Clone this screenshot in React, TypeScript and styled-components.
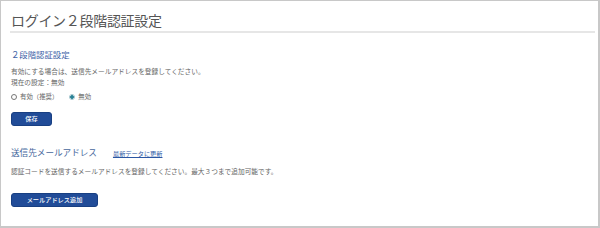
import styled, { createGlobalStyle } from 'styled-components';

const GlobalStyle = createGlobalStyle`
  html, body {
    margin: 0;
    padding: 0;
    background: #ffffff;
  }
  body {
    font-family: "Noto Sans CJK JP", "Noto Sans", sans-serif;
  }
`;

const Frame = styled.div`
  width: 600px;
  height: 228px;
  box-sizing: border-box;
  border: 1px solid #c8c8c8;
  border-right-width: 2px;
  border-bottom-width: 2px;
  padding: 0 3px 0 9px;
  background: #ffffff;
`;

const PageTitle = styled.h1`
  margin: 9px 0 0;
  padding: 0 0 1px 1px;
  font-size: 14px;
  line-height: 20px;
  font-weight: 400;
  color: #555555;
  border-bottom: 2px solid #e6e6e6;
  letter-spacing: -0.3px;
`;

const Body = styled.div`
  display: flex;
  flex-direction: column;
  align-items: flex-start;
  padding-left: 1px;
`;

const SectionTitle = styled.h2<{ $top: number }>`
  margin: ${({ $top }) => $top}px 0 0;
  display: flex;
  align-items: baseline;
  gap: 16px;
  font-size: 8.4px;
  line-height: 12px;
  font-weight: 400;
  color: #3d62a6;
`;

const MailTitle = styled.span`
  font-size: 8.6px;
  color: #46679c;
`;

const RefreshLink = styled.a`
  font-size: 6.2px;
  color: #2b56a3;
  text-decoration: underline;
  cursor: pointer;
`;

const Note = styled.p<{ $top: number }>`
  margin: ${({ $top }) => $top}px 0 0;
  font-size: 6.7px;
  line-height: 11px;
  color: #666666;
`;

const RadioRow = styled.div`
  display: flex;
  align-items: center;
  margin-top: 3px;
  height: 11px;
  font-size: 6.4px;
  color: #666666;
`;

const RadioOption = styled.label`
  display: flex;
  align-items: center;
  gap: 2px;
  margin-right: 11px;
`;

const RadioMark = styled.span<{ $checked?: boolean }>`
  display: inline-block;
  box-sizing: border-box;
  width: 6px;
  height: 6px;
  border-radius: 50%;
  margin-right: 1px;
  border: 1px solid ${({ $checked }) => ($checked ? '#9fc3cb' : '#777777')};
  background: ${({ $checked }) =>
    $checked ? 'radial-gradient(circle, #2a8296 0 1.6px, #ffffff 2px)' : '#ffffff'};
`;

const Button = styled.button<{ $top: number; $width: number }>`
  margin-top: ${({ $top }) => $top}px;
  width: ${({ $width }) => $width}px;
  height: 14px;
  padding: 0;
  border: 1px solid #183f82;
  border-radius: 3px;
  background: #214c98;
  color: #ffffff;
  font-family: "Noto Sans CJK JP", "Noto Sans", sans-serif;
  font-size: 6.2px;
  font-weight: 500;
  line-height: 12px;
  cursor: pointer;
`;

export default function App() {
  return (
    <>
      <GlobalStyle />
      <Frame>
        <PageTitle>ログイン２段階認証設定</PageTitle>
        <Body>
          <SectionTitle $top={15}>２段階認証設定</SectionTitle>
          <Note $top={6}>有効にする場合は、送信先メールアドレスを登録してください。</Note>
          <Note $top={0}>現在の設定：無効</Note>
          <RadioRow>
            <RadioOption>
              <RadioMark />
              有効（推奨）
            </RadioOption>
            <RadioOption>
              <RadioMark $checked />
              無効
            </RadioOption>
          </RadioRow>
          <Button $top={10} $width={41}>保存</Button>
          <SectionTitle $top={20}>
            <MailTitle>送信先メールアドレス</MailTitle>
            <RefreshLink>最新データに更新</RefreshLink>
          </SectionTitle>
          <Note $top={6}>
            認証コードを送信するメールアドレスを登録してください。最大３つまで追加可能です。
          </Note>
          <Button $top={16} $width={87}>メールアドレス追加</Button>
        </Body>
      </Frame>
    </>
  );
}
